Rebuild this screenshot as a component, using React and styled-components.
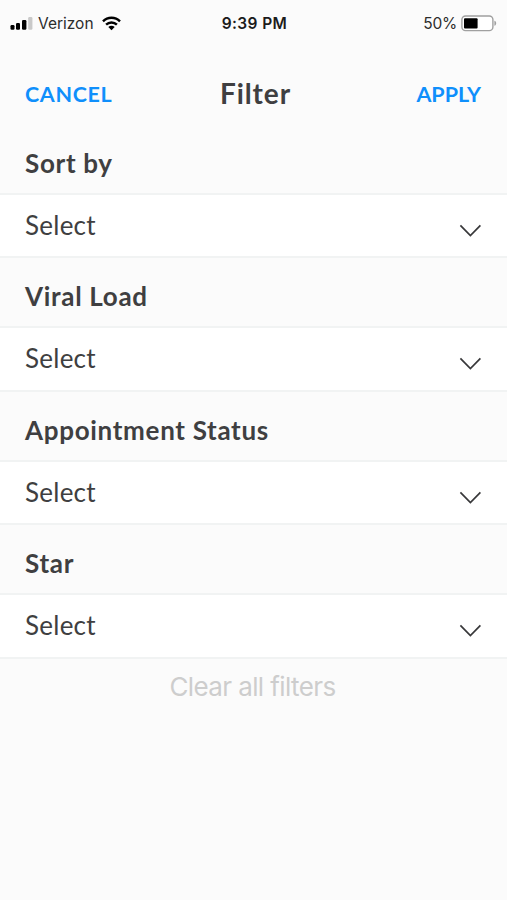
import React from 'react';
import styled, { createGlobalStyle } from 'styled-components';

const GlobalStyle = createGlobalStyle`
  * {
    box-sizing: border-box;
  }
  body {
    margin: 0;
    background: #fbfbfb;
    font-family: Lato, sans-serif;
    color: #3f3f41;
  }
`;

const Screen = styled.main`
  width: 100%;
  height: 900px;
  overflow: hidden;
  background: #fbfbfb;
`;

const StatusBar = styled.div`
  height: 46px;
  padding: 0 10px;
  display: grid;
  grid-template-columns: 1fr auto 1fr;
  align-items: center;
  font-family: Inter, sans-serif;
  font-size: 15.5px;
  color: #2c2c2c;
`;

const Carrier = styled.div`
  display: flex;
  align-items: center;
`;

const CarrierName = styled.span`
  margin: 0 8px 0 5px;
`;

const Clock = styled.div`
  padding-left: 2px;
  font-weight: 600;
  color: #1c1c1c;
  letter-spacing: 0.4px;
`;

const Power = styled.div`
  display: flex;
  align-items: center;
  justify-content: flex-end;
`;

const Percent = styled.span`
  margin-right: 4px;
  letter-spacing: -0.2px;
`;

const Header = styled.header`
  height: 79px;
  padding: 0 26px 0 25px;
  display: grid;
  grid-template-columns: 1fr auto 1fr;
  align-items: start;
`;

const HeaderButton = styled.button`
  justify-self: ${({ $align }) => $align};
  padding: 0;
  border: none;
  background: none;
  font-family: inherit;
  font-size: 21.5px;
  font-weight: 700;
  letter-spacing: ${({ $tracking }) => $tracking}px;
  line-height: 96px;
  color: #0f8ffb;
  cursor: pointer;
`;

const Title = styled.h1`
  margin: 0;
  padding-left: 5px;
  font-size: 28px;
  font-weight: 700;
  letter-spacing: 0.9px;
  line-height: 94px;
`;

const Section = styled.section`
  height: 133.4px;
`;

const SectionTitle = styled.h2`
  height: 68px;
  margin: 0;
  padding-left: 25px;
  font-size: 26px;
  font-weight: 700;
  letter-spacing: 0.69px;
  line-height: 77px;
`;

const SelectRow = styled.div`
  height: 65.4px;
  padding: 0 26px 0 25px;
  display: flex;
  justify-content: space-between;
  background: #fff;
  border-top: 2px solid #f1f3f3;
  border-bottom: 2px solid #f1f3f3;
  cursor: pointer;
`;

const SelectLabel = styled.span`
  font-size: 26px;
  letter-spacing: 0.25px;
  line-height: 61px;
`;

const Chevron = styled.svg`
  margin-top: 29px;
  width: 22px;
  height: 14px;
`;

const ClearButton = styled.button`
  display: block;
  margin: 0 auto;
  padding: 0 2px 0 0;
  border: none;
  background: none;
  font-family: Inter, sans-serif;
  font-size: 26px;
  letter-spacing: -0.6px;
  line-height: 56px;
  color: #cdcdcd;
  cursor: pointer;
`;

const sections = ['Sort by', 'Viral Load', 'Appointment Status', 'Star'];

const SignalIcon = () => (
  <svg width="23" height="14" viewBox="0 0 23 14">
    <rect x="0.5" y="9" width="4" height="4.7" rx="1.2" fill="#000" />
    <rect x="6" y="7" width="4" height="6.7" rx="1.2" fill="#000" />
    <rect x="12" y="4" width="4.4" height="9.7" rx="1.2" fill="#000" />
    <rect x="18.2" y="1" width="4.2" height="12.7" rx="1.2" fill="#c9c9c9" />
  </svg>
);

const WifiIcon = () => (
  <svg width="19" height="15" viewBox="0 0 19 15">
    <g fill="none" stroke="#000" strokeWidth="2.4">
      <path d="M1 5.4C5.7 0.6 13.3 0.6 18 5.4" />
      <path d="M4.1 8.7C7.1 5.7 11.9 5.7 14.9 8.7" />
    </g>
    <path d="M6.3 11C8.1 9.3 10.9 9.3 12.7 11L9.5 14.2Z" fill="#000" />
  </svg>
);

const BatteryIcon = () => (
  <svg width="36" height="17" viewBox="0 0 36 17">
    <rect x="0.9" y="1" width="31" height="14.6" rx="3.6" fill="#fff" stroke="#a0a0a0" strokeWidth="1.4" />
    <rect x="3" y="3.2" width="13.6" height="10.2" rx="1" fill="#000" />
    <path d="M33.4 5.8C35.8 6.4 35.8 10.2 33.4 10.8Z" fill="#a0a0a0" />
  </svg>
);

const FilterSection = ({ title }) => {
  return (
    <Section>
      <SectionTitle>{title}</SectionTitle>
      <SelectRow>
        <SelectLabel>Select</SelectLabel>
        <Chevron viewBox="0 0 22 14">
          <path d="M1.4 1.4L11.4 11.6L21.4 1.4" fill="none" stroke="#38383a" strokeWidth="1.7" />
        </Chevron>
      </SelectRow>
    </Section>
  );
};

const App = () => {
  return (
    <>
      <GlobalStyle />
      <Screen>
        <StatusBar>
          <Carrier>
            <SignalIcon />
            <CarrierName>Verizon</CarrierName>
            <WifiIcon />
          </Carrier>
          <Clock>9:39 PM</Clock>
          <Power>
            <Percent>50%</Percent>
            <BatteryIcon />
          </Power>
        </StatusBar>
        <Header>
          <HeaderButton $align="start" $tracking={0.65}>CANCEL</HeaderButton>
          <Title>Filter</Title>
          <HeaderButton $align="end" $tracking={0}>APPLY</HeaderButton>
        </Header>
        {sections.map((title) => (
          <FilterSection key={title} title={title} />
        ))}
        <ClearButton>Clear all filters</ClearButton>
      </Screen>
    </>
  );
};

export default App;
